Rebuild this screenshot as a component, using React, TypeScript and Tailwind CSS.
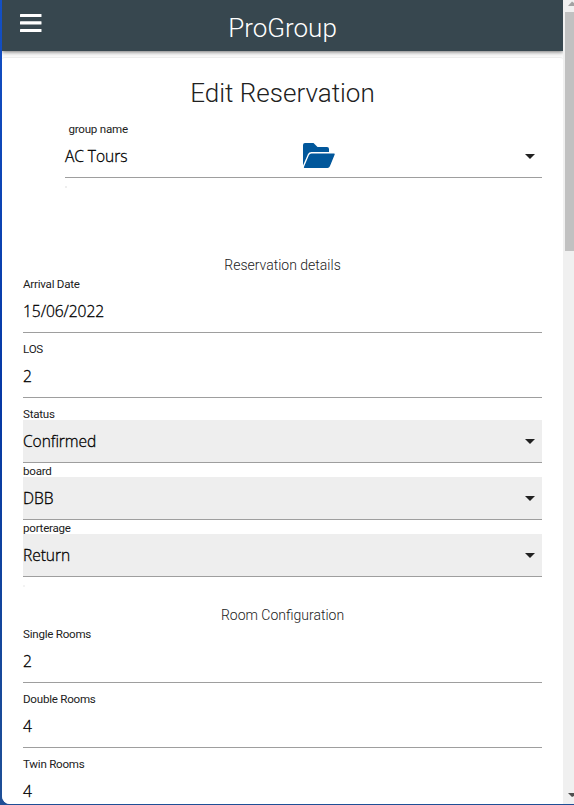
import React from "react";

const labelStyle = "block h-[14px] whitespace-nowrap text-[11.6px] leading-[14px] tracking-[-0.24px] text-[#212121]";
const valueStyle =
  "pt-px font-['Open_Sans',sans-serif] text-[15.6px] font-light tracking-[-0.08px] text-black whitespace-nowrap [-webkit-text-stroke:0.3px_#000]";

function Caret() {
  return (
    <svg className="-mt-px mr-[7px] h-[5px] w-[10px] shrink-0" viewBox="0 0 10 5">
      <path d="M0 0h10L5 5z" fill="#212121" />
    </svg>
  );
}

function Field({ label, value }: { label: string; value: string }) {
  return (
    <div className="mb-[9px] h-14 shrink-0">
      <label className={labelStyle}>{label}</label>
      <div className={`flex h-[42px] items-center border-b border-[#9e9e9e] ${valueStyle}`}>{value}</div>
    </div>
  );
}

function SelectField({ label, value }: { label: string; value: string }) {
  return (
    <div className="h-[57px] shrink-0">
      <label className={`${labelStyle} pt-px`}>{label}</label>
      <div
        className={`flex h-[43px] items-center justify-between border-b border-[#9e9e9e] bg-[#eeeeee] ${valueStyle}`}
      >
        <span>{value}</span>
        <Caret />
      </div>
    </div>
  );
}

export default function App() {
  return (
    <div className="flex h-[805px] w-[574px] overflow-hidden bg-gradient-to-b from-[#1450c4] via-[#0638a4] to-[#1f4f96] pb-px pl-[2px] font-['Roboto',sans-serif]">
      <main className="flex w-[561px] flex-col overflow-hidden rounded-bl-lg bg-[#fafafa]">
        <header className="z-10 grid h-[51px] shrink-0 grid-cols-3 bg-[#37474f] text-white shadow-[0_1px_4px_rgba(0,0,0,0.55)]">
          <svg className="ml-[18px] mt-[14px] h-[18px] w-[22px]" viewBox="0 0 22 18" fill="white">
            <rect width="21.5" height="3" rx=".5" />
            <rect y="7.2" width="21.5" height="3.4" rx=".5" />
            <rect y="15" width="21.5" height="3" rx=".5" />
          </svg>
          <h1 className="pt-[9px] text-center text-[26px] font-light leading-[38px]">ProGroup</h1>
        </header>
        <section className="mt-[6px] flex min-h-0 flex-1 flex-col overflow-hidden rounded-t-[3px] border-t border-[#eeeeee] bg-white pl-[21px] pr-[21px]">
          <h2 className="mt-[16px] h-[38px] shrink-0 text-center text-[26px] font-light leading-[38px] text-[#212121]">
            Edit Reservation
          </h2>
          <div className="ml-[42px] mt-[10px] h-[56px] shrink-0">
            <label className={`${labelStyle} pl-[3.5px]`}>group name</label>
            <div
              className={`grid h-[42px] grid-cols-[238px_1fr_auto] items-center border-b border-[#9e9e9e] ${valueStyle}`}
            >
              <span>AC Tours</span>
              <svg className="mt-[-3px] h-[25px] w-[32px]" viewBox="0 0 32 25" fill="#01579b">
                <path d="M0 22.5V2Q0 0 2 0H10.5L14.5 4H24Q26 4 26 6V9H8.5Q6 9 5 11Z" />
                <path d="M8.5 10.5H31Q32 10.5 31.7 11.5L27 23Q26.2 25 24.5 25H1.5Q.5 25 1 23.8L6 12Q6.7 10.5 8.5 10.5Z" />
              </svg>
              <Caret />
            </div>
          </div>
          <div className="ml-[42px] mt-2 h-[2px] w-[2px] shrink-0 bg-[#eeeeee]" />
          <h3 className="mb-px mt-[67px] h-[20px] shrink-0 text-center text-[14px] font-light leading-5 text-[#212121]">
            Reservation details
          </h3>
          <div className="mt-px flex h-[129px] shrink-0 flex-col">
            <Field label="Arrival Date" value="15/06/2022" />
            <Field label="LOS" value="2" />
          </div>
          <SelectField label="Status" value="Confirmed" />
          <SelectField label="board" value="DBB" />
          <SelectField label="porterage" value="Return" />
          <div className="mt-2 h-[2px] w-[2px] shrink-0 bg-[#f3f3f3]" />
          <h3 className="mb-[2px] mt-[18px] h-[20px] shrink-0 text-center text-[14px] font-light leading-5 text-[#212121]">
            Room Configuration
          </h3>
          <Field label="Single Rooms" value="2" />
          <Field label="Double Rooms" value="4" />
          <Field label="Twin Rooms" value="4" />
        </section>
      </main>
      <aside className="flex w-[11px] flex-col items-end justify-between bg-[#f0f0f0]">
        <div className="w-[9px]">
          <svg className="h-3 w-[9px]" viewBox="0 0 9 12">
            <path d="M3 6h6V3L7 1.5z" fill="#a3a3a3" />
          </svg>
          <div className="h-[239px] bg-[#c1c1c1]" />
        </div>
        <svg className="h-3 w-[9px]" viewBox="0 0 9 12">
          <path d="M3 1h6v3L7 5z" fill="#505050" />
        </svg>
      </aside>
    </div>
  );
}
